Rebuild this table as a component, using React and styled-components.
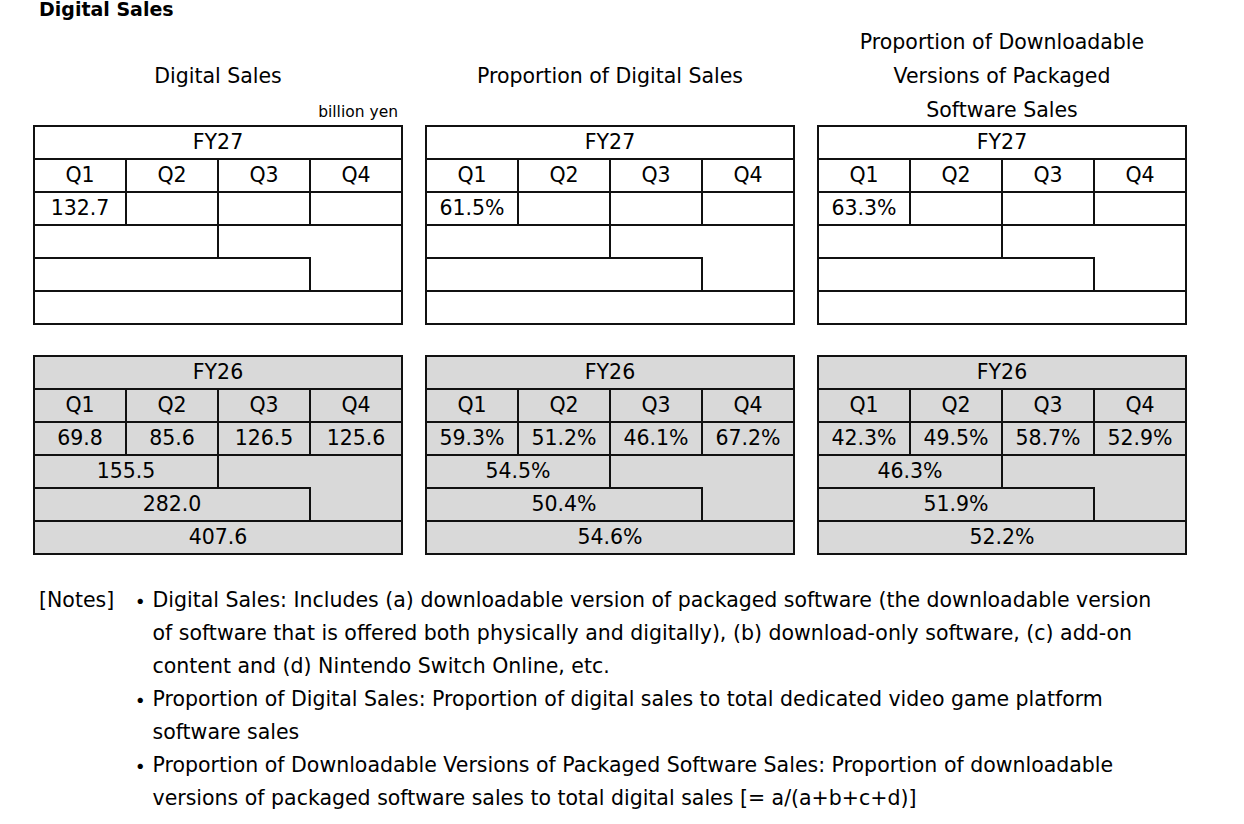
import React from 'react';
import styled, { createGlobalStyle } from 'styled-components';

const GlobalStyle = createGlobalStyle`
  html, body {
    margin: 0;
    padding: 0;
    background: #fff;
  }
  body {
    font-family: "DejaVu Sans", Tahoma, sans-serif;
    color: #000;
  }
`;

const Page = styled.div`
  width: 1244px;
  height: 824px;
  overflow: hidden;
  padding-left: 33px;
  box-sizing: border-box;
`;

const Title = styled.h1`
  margin: -2px 0 0 6px;
  height: 26px;
  font-size: 19px;
  font-weight: bold;
  line-height: 22px;
`;

const Groups = styled.div`
  display: flex;
  gap: 22px;
`;

const Group = styled.div`
  display: flex;
  flex-direction: column;
  width: 370px;
`;

const Header = styled.div`
  height: 101px;
  box-sizing: border-box;
  padding-top: 1px;
  display: flex;
  flex-direction: column;
  font-size: 20.5px;
  line-height: 34px;
  text-align: center;
`;

const HeadLine = styled.div`
  height: 34px;
  flex: none;
  white-space: nowrap;
`;

const Unit = styled.div`
  height: 32px;
  padding-top: 2px;
  font-size: 15.5px;
  text-align: right;
  padding-right: 5px;
`;

const Table = styled.div`
  display: grid;
  grid-template-columns: repeat(4, 92px);
  grid-template-rows: repeat(6, 33px);
  width: 370px;
  box-sizing: border-box;
  border-right: 2px solid #111;
  border-bottom: 2px solid #111;
  background: ${p => (p.$gray ? '#d9d9d9' : '#fff')};
  margin-top: ${p => p.$gap || 0}px;
`;

const Cell = styled.div`
  grid-column: ${p => p.$col};
  grid-row: ${p => p.$row};
  display: flex;
  align-items: center;
  justify-content: center;
  box-sizing: border-box;
  border-top: ${p => (p.$noTop ? 'none' : '2px solid #111')};
  border-left: 2px solid #111;
  font-size: 20.5px;
  white-space: nowrap;
  padding-bottom: 1px;
`;

const Notes = styled.div`
  display: flex;
  margin-top: 29px;
  padding-left: 6px;
  font-size: 20.5px;
  line-height: 33px;
`;

const NotesLabel = styled.div`
  width: 93px;
  flex: none;
`;

const NoteList = styled.ul`
  margin: 0;
  padding: 0;
  list-style: none;
`;

const NoteItem = styled.li`
  display: flex;
`;

const Bullet = styled.span`
  flex: 0 0 20px;
  margin-left: -2px;
  margin-right: 2px;
  font-family: "Noto Sans CJK JP", sans-serif;
  font-weight: bold;
  text-align: center;
`;

const NoteLine = styled.span`
  display: block;
  white-space: nowrap;
`;

const fy27 = {
  sales: ['132.7', '', '', ''],
  digital: ['61.5%', '', '', ''],
  download: ['63.3%', '', '', ''],
};

const fy26 = {
  sales: { q: ['69.8', '85.6', '126.5', '125.6'], h1: '155.5', q3: '282.0', fy: '407.6' },
  digital: { q: ['59.3%', '51.2%', '46.1%', '67.2%'], h1: '54.5%', q3: '50.4%', fy: '54.6%' },
  download: { q: ['42.3%', '49.5%', '58.7%', '52.9%'], h1: '46.3%', q3: '51.9%', fy: '52.2%' },
};

function QuarterTable({ year, quarters, h1, q3, fy, gray, gap }) {
  return (
    <Table $gray={gray} $gap={gap}>
      <Cell $col="1 / 5" $row="1">{year}</Cell>
      {['Q1', 'Q2', 'Q3', 'Q4'].map((q, i) => (
        <Cell key={q} $col={`${i + 1}`} $row="2">{q}</Cell>
      ))}
      {quarters.map((v, i) => (
        <Cell key={i} $col={`${i + 1}`} $row="3">{v}</Cell>
      ))}
      <Cell $col="1 / 3" $row="4">{h1}</Cell>
      <Cell $col="3 / 5" $row="4"></Cell>
      <Cell $col="1 / 4" $row="5">{q3}</Cell>
      <Cell $col="4" $row="5" $noTop></Cell>
      <Cell $col="1 / 5" $row="6">{fy}</Cell>
    </Table>
  );
}

function TableGroup({ header, unit, current, past }) {
  return (
    <Group>
      <Header>{header}{unit}</Header>
      <QuarterTable year="FY27" quarters={current} />
      <QuarterTable year="FY26" gray gap={30} quarters={past.q} h1={past.h1} q3={past.q3} fy={past.fy} />
    </Group>
  );
}

export default function App() {
  return (
    <Page>
      <GlobalStyle />
      <Title>Digital Sales</Title>
      <Groups>
        <TableGroup
          header={<><HeadLine /><HeadLine>Digital Sales</HeadLine></>}
          unit={<Unit>billion yen</Unit>}
          current={fy27.sales}
          past={fy26.sales}
        />
        <TableGroup
          header={<><HeadLine /><HeadLine>Proportion of Digital Sales</HeadLine></>}
          current={fy27.digital}
          past={fy26.digital}
        />
        <TableGroup
          header={<>
            <HeadLine>Proportion of Downloadable</HeadLine>
            <HeadLine>Versions of Packaged</HeadLine>
            <HeadLine>Software Sales</HeadLine>
          </>}
          current={fy27.download}
          past={fy26.download}
        />
      </Groups>
      <Notes>
        <NotesLabel>[Notes]</NotesLabel>
        <NoteList>
          <NoteItem>
            <Bullet>・</Bullet>
            <div>
              <NoteLine>Digital Sales: Includes (a) downloadable version of packaged software (the downloadable version</NoteLine>
              <NoteLine>of software that is offered both physically and digitally), (b) download-only software, (c) add-on</NoteLine>
              <NoteLine>content and (d) Nintendo Switch Online, etc.</NoteLine>
            </div>
          </NoteItem>
          <NoteItem>
            <Bullet>・</Bullet>
            <div>
              <NoteLine>Proportion of Digital Sales: Proportion of digital sales to total dedicated video game platform</NoteLine>
              <NoteLine>software sales</NoteLine>
            </div>
          </NoteItem>
          <NoteItem>
            <Bullet>・</Bullet>
            <div>
              <NoteLine>Proportion of Downloadable Versions of Packaged Software Sales: Proportion of downloadable</NoteLine>
              <NoteLine>versions of packaged software sales to total digital sales [= a/(a+b+c+d)]</NoteLine>
            </div>
          </NoteItem>
        </NoteList>
      </Notes>
    </Page>
  );
}
